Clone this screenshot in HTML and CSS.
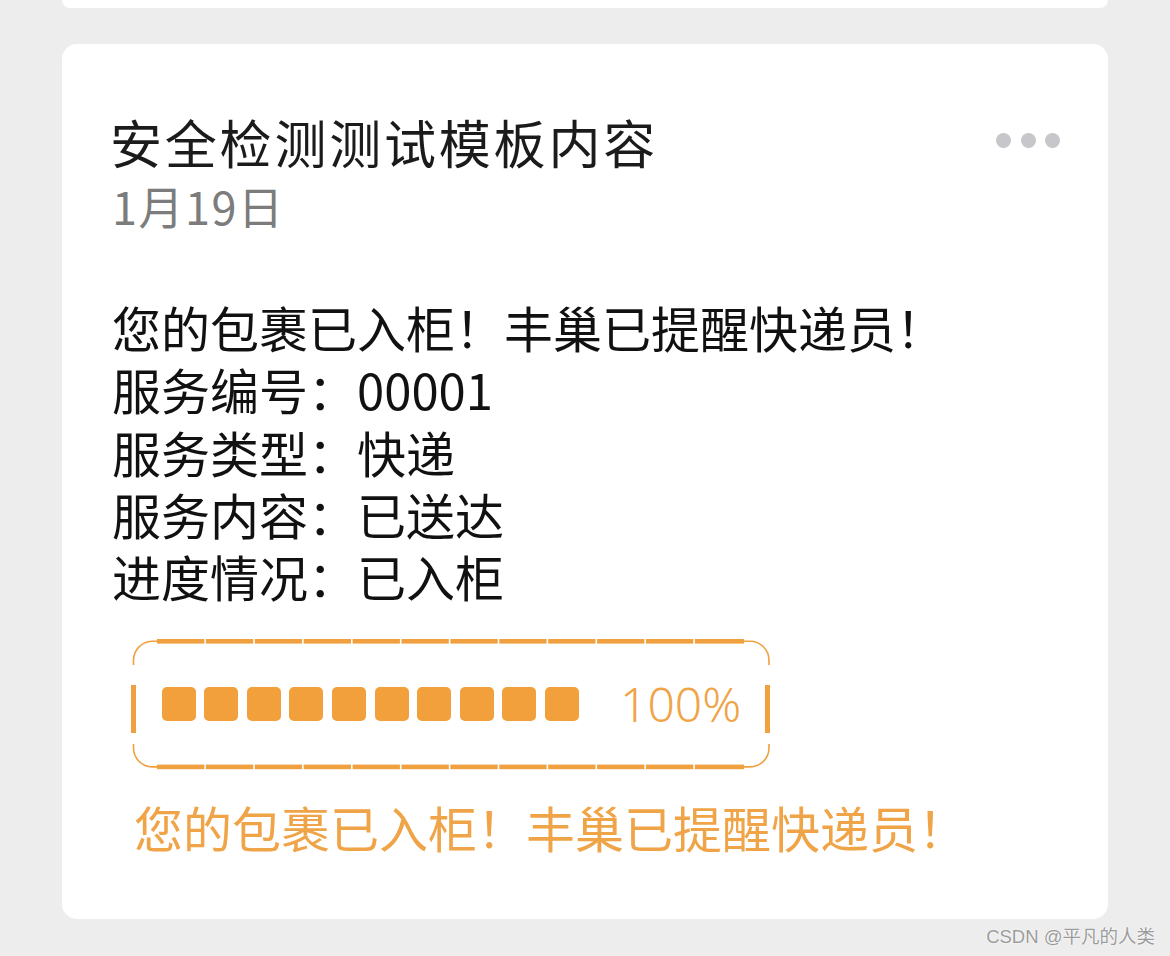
FILE: index.html
```html
<!DOCTYPE html>
<html lang="zh-CN">
<head>
<meta charset="utf-8">
<title>安全检测测试模板内容</title>
<link rel="stylesheet" href="styles.css">
</head>
<body>
<div class="prev-card"></div>
<div class="card">
  <div class="header">
    <div class="title">安全检测测试模板内容</div>
    <div class="more"><span class="dot"></span><span class="dot"></span><span class="dot"></span></div>
  </div>
  <div class="date">1月19日</div>
  <div class="body">
    <div class="line">您的包裹已入柜！丰巢已提醒快递员！</div>
    <div class="line">服务编号：00001</div>
    <div class="line">服务类型：快递</div>
    <div class="line">服务内容：已送达</div>
    <div class="line">进度情况：已入柜</div>
  </div>
  <div class="progress">
    <svg class="frame" width="646" height="136" viewBox="0 0 646 136" aria-hidden="true">
      <g fill="#F0A03E">
        <rect x="29" y="3" width="47.3" height="4.6"/>
        <rect x="77.9" y="3" width="47.3" height="4.6"/>
        <rect x="126.8" y="3" width="47.3" height="4.6"/>
        <rect x="175.7" y="3" width="47.3" height="4.6"/>
        <rect x="224.6" y="3" width="47.3" height="4.6"/>
        <rect x="273.5" y="3" width="47.3" height="4.6"/>
        <rect x="322.4" y="3" width="47.3" height="4.6"/>
        <rect x="371.3" y="3" width="47.3" height="4.6"/>
        <rect x="420.2" y="3" width="47.3" height="4.6"/>
        <rect x="469.1" y="3" width="47.3" height="4.6"/>
        <rect x="518" y="3" width="47.3" height="4.6"/>
        <rect x="566.9" y="3" width="49.1" height="4.6"/>
        <rect x="29" y="128.6" width="47.3" height="4.6"/>
        <rect x="77.9" y="128.6" width="47.3" height="4.6"/>
        <rect x="126.8" y="128.6" width="47.3" height="4.6"/>
        <rect x="175.7" y="128.6" width="47.3" height="4.6"/>
        <rect x="224.6" y="128.6" width="47.3" height="4.6"/>
        <rect x="273.5" y="128.6" width="47.3" height="4.6"/>
        <rect x="322.4" y="128.6" width="47.3" height="4.6"/>
        <rect x="371.3" y="128.6" width="47.3" height="4.6"/>
        <rect x="420.2" y="128.6" width="47.3" height="4.6"/>
        <rect x="469.1" y="128.6" width="47.3" height="4.6"/>
        <rect x="518" y="128.6" width="47.3" height="4.6"/>
        <rect x="566.9" y="128.6" width="49.1" height="4.6"/>
        <rect x="3" y="49" width="5" height="48"/>
        <rect x="637" y="49" width="5" height="48"/>
      </g>
      <g fill="none" stroke="#F0A03E" stroke-width="1.6">
        <path d="M29 5.3 H24 A19 19 0 0 0 5.5 24 V29"/>
        <path d="M5.5 108 V112 A19 19 0 0 0 24 130.9 H29"/>
        <path d="M616 5.3 H622 A19 19 0 0 1 641 24 V29"/>
        <path d="M641 108 V112 A19 19 0 0 1 622 130.9 H616"/>
      </g>
    </svg>
    <div class="blocks">
      <span class="block"></span><span class="block"></span><span class="block"></span><span class="block"></span><span class="block"></span>
      <span class="block"></span><span class="block"></span><span class="block"></span><span class="block"></span><span class="block"></span>
    </div>
    <div class="percent">100%</div>
  </div>
  <div class="notice">您的包裹已入柜！丰巢已提醒快递员！</div>
</div>
<div class="watermark">CSDN @平凡的人类</div>
</body>
</html>
```

FILE: styles.css
```css
html, body {
  margin: 0;
  padding: 0;
}
body {
  background: #ededed;
  font-family: "Noto Sans CJK SC", "Noto Sans", sans-serif;
  width: 1170px;
  height: 956px;
  overflow: hidden;
  position: relative;
}
.prev-card {
  margin: 0 62px;
  height: 8px;
  background: #ffffff;
  border-radius: 0 0 14px 14px;
}
.card {
  margin: 36px 62px 0;
  height: 875px;
  box-sizing: border-box;
  background: #ffffff;
  border-radius: 15px;
  padding: 66px 48px 0 50px;
}
.header {
  display: flex;
  align-items: center;
  justify-content: space-between;
  height: 64px;
}
.title {
  font-size: 52px;
  line-height: 64px;
  letter-spacing: 2.8px;
  margin-left: -2px;
  color: #1b1b1b;
}
.more {
  display: flex;
  gap: 9.5px;
  margin-top: -4px;
}
.dot {
  width: 15px;
  height: 15px;
  border-radius: 50%;
  background: #c6c6cb;
}
.date {
  font-size: 45px;
  line-height: 64px;
  letter-spacing: 1.5px;
  color: #7c7c7c;
}
.body {
  margin-top: 58px;
}
.line {
  font-size: 49px;
  line-height: 62.3px;
  color: #111111;
}
.progress {
  position: relative;
  width: 646px;
  height: 136px;
  margin: 29px 0 0 16px;
  display: flex;
  align-items: center;
  padding-left: 33.7px;
  box-sizing: border-box;
}
.frame {
  position: absolute;
  left: 0;
  top: 0;
}
.blocks {
  display: flex;
  gap: 8.6px;
}
.block {
  width: 34px;
  height: 34px;
  border-radius: 5px;
  background: #F2A03C;
}
.percent {
  margin-left: 41px;
  font-family: "Noto Sans", sans-serif;
  font-weight: 300;
  font-size: 48px;
  line-height: 1;
  color: #F0A448;
}
.notice {
  margin: 24px 0 0 22px;
  font-size: 49px;
  line-height: 62px;
  color: #F0A448;
}
.watermark {
  position: absolute;
  right: 15px;
  bottom: 8px;
  font-family: "Liberation Sans", "Noto Sans CJK SC", sans-serif;
  font-size: 18.5px;
  line-height: 22px;
  color: #9b9b9b;
  text-shadow: 0 0 2px #ffffff, 0 0 1px #ffffff;
}
```
